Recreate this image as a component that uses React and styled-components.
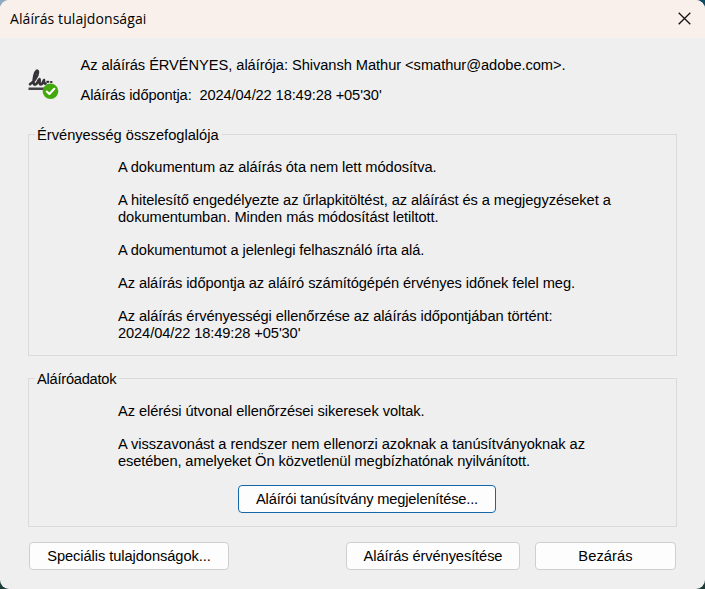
import React from 'react';
import styled, { createGlobalStyle } from 'styled-components';

const GlobalStyle = createGlobalStyle`
  * {
    box-sizing: border-box;
  }
  body {
    margin: 0;
    overflow: hidden;
  }
`

const Backdrop = styled.div`
  width: 705px;
  height: 589px;
  background: linear-gradient(90deg, #8fa9c1 0, #8fa9c1 50%, #0d4a63 50%) top / 100% 50% no-repeat,
    #1d3b38;
`

const Dialog = styled.div`
  display: flex;
  flex-direction: column;
  width: 705px;
  height: 589px;
  overflow: hidden;
  border-radius: 9px;
  background-color: #efefef;
  color: #000;
  font-family: 'Liberation Sans', Arial, sans-serif;
  font-size: 14.67px;
  line-height: 17px;
`

const TitleBar = styled.div`
  display: flex;
  justify-content: space-between;
  align-items: center;
  height: 38px;
  padding: 0 14px 2px 10px;
  background-color: #f9f0ec;
`

const Title = styled.div`
  font-family: 'Open Sans', 'Noto Sans', sans-serif;
  font-size: 14px;
  letter-spacing: 0.07px;
  white-space: nowrap;
`

const CloseButton = styled.button`
  display: flex;
  padding: 0;
  border: 0;
  background: none;
`

const Body = styled.div`
  display: flex;
  flex-direction: column;
  padding: 19px 28px 0;
`

const Summary = styled.div`
  display: flex;
  height: 69px;
`

const IconCell = styled.div`
  width: 52.5px;
  padding-top: 10px;
`

const SummaryText = styled.div`
  display: flex;
  flex-direction: column;
  gap: 13px;
`

const Line = styled.div`
  white-space: pre;
  letter-spacing: ${props => props.$spacing || 'normal'};
  word-spacing: ${props => props.$words || 'normal'};
`

const Group = styled.fieldset`
  width: 649px;
  height: ${props => props.$height};
  margin: 0 0 ${props => props.$gap || 0};
  padding: 16px 0 0 89px;
  border: 1px solid #dadada;
`

const Legend = styled.legend`
  height: 17px;
  margin-left: -83px;
  padding: 1px 3px 0 2px;
  letter-spacing: ${props => props.$spacing || 'normal'};
`

const Paragraphs = styled.div`
  display: flex;
  flex-direction: column;
  gap: 16px;
`

const Button = styled.button`
  width: ${props => props.$width};
  height: 28px;
  padding: 1px 0 0;
  border: 1px solid ${props => (props.$primary ? '#1667a8' : '#cfcfcf')};
  border-radius: 4px;
  background-color: #fdfdfd;
  color: #000;
  font: inherit;
  letter-spacing: ${props => props.$spacing || 'normal'};
  white-space: nowrap;
`

const CertificateRow = styled.div`
  display: flex;
  padding: 15px 0 0 120px;
`

const Footer = styled.div`
  display: flex;
  gap: 15px;
  padding: 15px 0 0 1px;
`

const Spacer = styled.div`
  width: 87px;
`

const SignatureIcon = () => (
  <svg width="32" height="34" viewBox="0 0 32 34" fill="none">
    <path
      d="M2 17.3 C5 16 10 9.5 10 5 C9.8 2.3 7.3 4 6.5 8 C5.7 12 4.6 17.8 7 17.8 C9.3 17.6 10 13 11.5 12.2 C12.2 13.5 10.6 17.6 12.8 17.5 C14.8 17.2 15.2 14.5 16 13 C16 14.8 15.8 17 17.6 16.6"
      stroke="#353338"
      strokeWidth="2.6"
      strokeLinecap="round"
      strokeLinejoin="round"
    />
    <path d="M19.3 14.8 H20.3 M23 15 H23.5" stroke="#353338" strokeWidth="2.2" strokeLinecap="round" />
    <path d="M0.5 21.8 H17" stroke="#454248" strokeWidth="2.4" />
    <circle cx="22.5" cy="24.3" r="7.8" fill="#43a80b" />
    <path
      d="M18.8 24.5 L21.4 27 L26.3 21.8"
      stroke="#fff"
      strokeWidth="2.1"
      strokeLinecap="round"
      strokeLinejoin="round"
    />
  </svg>
)

const CloseIcon = () => (
  <svg width="13" height="13" viewBox="0 0 13 13">
    <path d="M0.7 0.7 L12.3 12.3 M12.3 0.7 L0.7 12.3" stroke="#111" strokeWidth="1.3" />
  </svg>
)

const App = () => {
  return (
    <Backdrop>
      <GlobalStyle />
      <Dialog>
        <TitleBar>
          <Title>Aláírás tulajdonságai</Title>
          <CloseButton aria-label="Bezárás"><CloseIcon /></CloseButton>
        </TitleBar>
        <Body>
          <Summary>
            <IconCell><SignatureIcon /></IconCell>
            <SummaryText>
              <Line $spacing="-0.055px">Az aláírás ÉRVÉNYES, aláírója: Shivansh Mathur &lt;smathur@adobe.com&gt;.</Line>
              <Line $spacing="-0.12px">Aláírás időpontja:  2024/04/22 18:49:28 +05'30'</Line>
            </SummaryText>
          </Summary>
          <Group $height="230px" $gap="14px">
            <Legend>Érvényesség összefoglalója</Legend>
            <Paragraphs>
              <Line $spacing="-0.03px" $words="-0.25px">A dokumentum az aláírás óta nem lett módosítva.</Line>
              <div>
                <Line $spacing="-0.075px">A hitelesítő engedélyezte az űrlapkitöltést, az aláírást és a megjegyzéseket a</Line>
                <Line $spacing="-0.06px">dokumentumban. Minden más módosítást letiltott.</Line>
              </div>
              <Line $spacing="-0.105px">A dokumentumot a jelenlegi felhasználó írta alá.</Line>
              <Line $spacing="-0.095px">Az aláírás időpontja az aláíró számítógépén érvényes időnek felel meg.</Line>
              <div>
                <Line $spacing="-0.08px">Az aláírás érvényességi ellenőrzése az aláírás időpontjában történt:</Line>
                <Line $spacing="-0.11px">2024/04/22 18:49:28 +05'30'</Line>
              </div>
            </Paragraphs>
          </Group>
          <Group $height="157px">
            <Legend $spacing="-0.25px">Aláíróadatok</Legend>
            <Paragraphs>
              <Line $spacing="-0.08px">Az elérési útvonal ellenőrzései sikeresek voltak.</Line>
              <div>
                <Line $spacing="-0.045px">A visszavonást a rendszer nem ellenorzi azoknak a tanúsítványoknak az</Line>
                <Line $spacing="-0.11px">esetében, amelyeket Ön közvetlenül megbízhatónak nyilvánított.</Line>
              </div>
            </Paragraphs>
            <CertificateRow>
              <Button $primary $width="258px" $spacing="-0.17px">Aláírói tanúsítvány megjelenítése...</Button>
            </CertificateRow>
          </Group>
          <Footer>
            <Button $width="200px" $spacing="-0.07px">Speciális tulajdonságok...</Button>
            <Spacer />
            <Button $width="174px" $spacing="-0.1px">Aláírás érvényesítése</Button>
            <Button $width="141px" $spacing="0.1px">Bezárás</Button>
          </Footer>
        </Body>
      </Dialog>
    </Backdrop>
  )
}

export default App;
